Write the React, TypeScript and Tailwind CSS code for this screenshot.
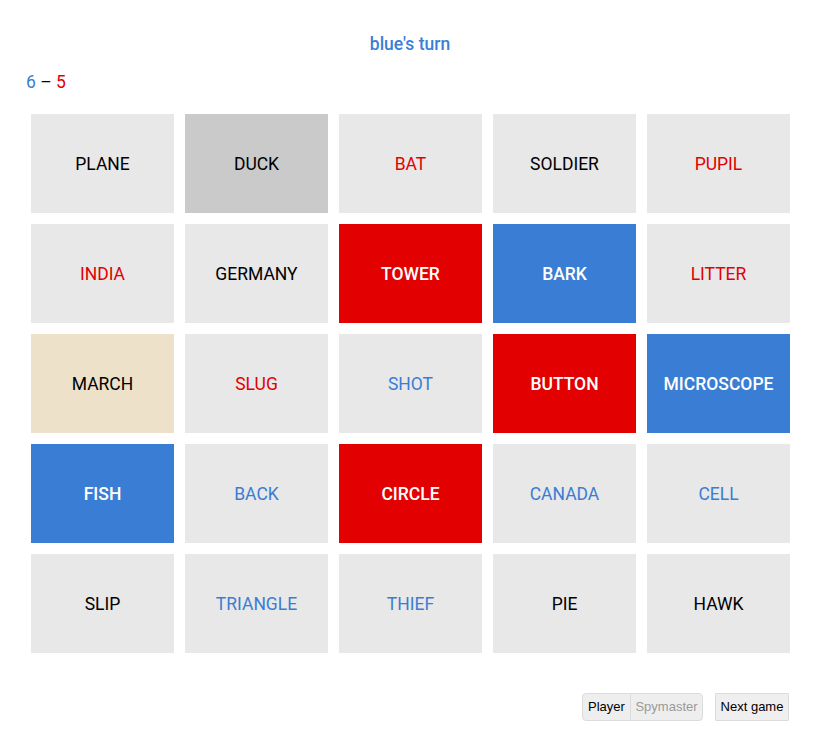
import React from 'react';

type Card = { word: string; kind: 'hidden' | 'red' | 'blue' | 'neutral' | 'assassin'; revealed: boolean };

const cards: Card[] = [
  { word: 'PLANE', kind: 'neutral', revealed: false },
  { word: 'DUCK', kind: 'assassin', revealed: false },
  { word: 'BAT', kind: 'red', revealed: false },
  { word: 'SOLDIER', kind: 'neutral', revealed: false },
  { word: 'PUPIL', kind: 'red', revealed: false },
  { word: 'INDIA', kind: 'red', revealed: false },
  { word: 'GERMANY', kind: 'neutral', revealed: false },
  { word: 'TOWER', kind: 'red', revealed: true },
  { word: 'BARK', kind: 'blue', revealed: true },
  { word: 'LITTER', kind: 'red', revealed: false },
  { word: 'MARCH', kind: 'neutral', revealed: true },
  { word: 'SLUG', kind: 'red', revealed: false },
  { word: 'SHOT', kind: 'blue', revealed: false },
  { word: 'BUTTON', kind: 'red', revealed: true },
  { word: 'MICROSCOPE', kind: 'blue', revealed: true },
  { word: 'FISH', kind: 'blue', revealed: true },
  { word: 'BACK', kind: 'blue', revealed: false },
  { word: 'CIRCLE', kind: 'red', revealed: true },
  { word: 'CANADA', kind: 'blue', revealed: false },
  { word: 'CELL', kind: 'blue', revealed: false },
  { word: 'SLIP', kind: 'neutral', revealed: false },
  { word: 'TRIANGLE', kind: 'blue', revealed: false },
  { word: 'THIEF', kind: 'blue', revealed: false },
  { word: 'PIE', kind: 'neutral', revealed: false },
  { word: 'HAWK', kind: 'neutral', revealed: false },
];

function cardClass(c: Card) {
  if (c.revealed) {
    if (c.kind === 'red') return 'bg-[#e30000] text-white font-medium';
    if (c.kind === 'blue') return 'bg-[#3a7dd4] text-white font-medium';
    return 'bg-[#ede1ca] text-black';
  }
  if (c.kind === 'assassin') return 'bg-[#cacaca] text-black';
  if (c.kind === 'red') return 'bg-[#e8e8e8] text-[#e30000]';
  if (c.kind === 'blue') return 'bg-[#e8e8e8] text-[#3a7dd4]';
  return 'bg-[#e8e8e8] text-black';
}

export default function App() {
  return (
    <div className="w-[824px] h-[742px] bg-white font-['Roboto',sans-serif]">
      <div className="pt-[32px] pr-[4px] text-center text-[17.5px] leading-6 text-[#3a7fd5] font-medium">blue's turn</div>
      <div className="mt-[14px] pl-[26px] text-[17.5px] leading-6">
        <span className="text-[#3a7dd4]">6</span>
        <span className="text-black"> – </span>
        <span className="text-[#e30000]">5</span>
      </div>
      <div className="mt-[20px] ml-[31px] w-[759px] grid grid-cols-5 gap-[11px]">
        {cards.map((c) => (
          <div key={c.word} className={`h-[99px] pt-[2px] flex items-center justify-center text-[17.5px] ${cardClass(c)}`}>
            {c.word}
          </div>
        ))}
      </div>
      <div className="mt-[40px] mr-[35px] flex justify-end gap-[12px] font-['Liberation_Sans',sans-serif] text-[13px]">
        <div className="flex h-[28px] rounded-[4px] border border-[#dcdcdc] bg-[#eeeeee] overflow-hidden">
          <button className="w-[47px] text-center text-black">Player</button>
          <button className="w-[72px] text-center border-l border-[#dcdcdc] text-[#9a9a9a]">Spymaster</button>
        </div>
        <button className="h-[28px] w-[74px] text-center border border-[#dcdcdc] bg-[#efefef] text-black rounded-[1px]">Next game</button>
      </div>
    </div>
  );
}
